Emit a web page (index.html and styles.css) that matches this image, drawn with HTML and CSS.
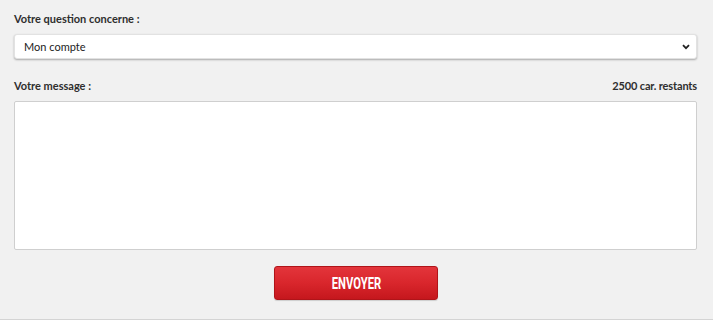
FILE: index.html
```html
<!DOCTYPE html>
<html lang="fr">
<head>
<meta charset="utf-8">
<link rel="stylesheet" href="styles.css">
</head>
<body>
<div class="page">
  <form class="contact">
    <div class="label-row"><span class="label">Votre question concerne :</span></div>
    <div class="select">
      <span class="select-value">Mon compte</span>
      <svg class="chevron" width="8" height="6" viewBox="0 0 8 6"><path d="M1 1.2 L4 4.2 L7 1.2" fill="none" stroke="#222" stroke-width="1.8"/></svg>
    </div>
    <div class="label-row msg-row">
      <span class="label">Votre message :</span>
      <span class="label counter">2500 car. restants</span>
    </div>
    <div class="textarea"></div>
    <div class="actions">
      <button type="button" class="send"><span class="send-text">ENVOYER</span></button>
    </div>
  </form>
</div>
</body>
</html>
```
FILE: styles.css
```css
html, body {
  margin: 0;
  padding: 0;
  background: #f1f1f1;
}
.page {
  width: 713px;
  height: 320px;
  box-sizing: border-box;
  border-bottom: 1px solid #d4d4d4;
  background: #f1f1f1;
  font-family: Lato, "Open Sans", sans-serif;
  color: #333;
}
.contact {
  padding: 10px 16px 0 14px;
  display: flex;
  flex-direction: column;
}
.label-row {
  display: flex;
  justify-content: space-between;
  height: 16px;
  align-items: center;
}
.label {
  font-weight: bold;
  font-size: 11px;
  color: #2e2e2e;
}
.counter {
  letter-spacing: -0.15px;
}
.select {
  margin-top: 8px;
  height: 25px;
  box-sizing: border-box;
  background: #fff;
  border: 1px solid #e2e2e2;
  border-radius: 3px;
  box-shadow: 0 1px 2px rgba(0,0,0,0.3);
  display: flex;
  align-items: center;
  justify-content: space-between;
  padding: 0 6px 0 9px;
}
.select-value {
  font-size: 11px;
  color: #222;
}
.msg-row {
  margin-top: 18px;
}
.textarea {
  margin-top: 8px;
  height: 149px;
  box-sizing: border-box;
  background: #fff;
  border: 1px solid #cfcfcf;
  border-radius: 2px;
}
.actions {
  display: flex;
  justify-content: center;
  margin-top: 16px;
}
.send {
  width: 164px;
  height: 34px;
  border: 1px solid #b01419;
  border-radius: 3px;
  background: linear-gradient(to bottom, #e3353b 0%, #d9262c 50%, #c5171d 100%);
  box-shadow: 0 1px 1px rgba(0,0,0,0.15);
  display: flex;
  align-items: center;
  justify-content: center;
  padding: 0;
  margin-left: 1px;
}
.send-text {
  display: inline-block;
  font-family: Roboto, "DejaVu Sans", sans-serif;
  font-weight: bold;
  font-size: 17px;
  color: #fff;
  transform: scaleX(0.66);
}
```
